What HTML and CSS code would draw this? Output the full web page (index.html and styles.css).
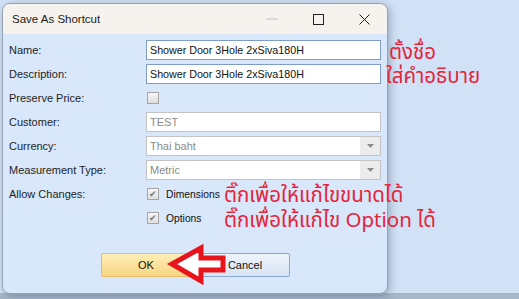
FILE: index.html
```html
<!DOCTYPE html>
<html lang="en">
<head>
  <meta charset="UTF-8" />
  <title>Save As Shortcut</title>
  <link rel="stylesheet" href="styles.css">
</head>
<body>
  <div class="dialog">
    <div class="titlebar">
      <span class="title">Save As Shortcut</span>
      <div class="controls">
        <span class="ctl"><svg width="12" height="2"><line x1="0" y1="1" x2="12" y2="1" stroke="#c4c4c4" /></svg></span>
        <span class="ctl"><svg width="11" height="11"><rect x="0.5" y="0.5" width="10" height="10" fill="none" stroke="#222" /></svg></span>
        <span class="ctl"><svg width="11" height="11"><path d="M0.5 0.5L10.5 10.5M10.5 0.5L0.5 10.5" stroke="#222" /></svg></span>
      </div>
    </div>

    <div class="content">
      <div class="form">
        <span class="label">Name:</span>
        <div class="text">Shower Door 3Hole 2xSiva180H</div>

        <span class="label">Description:</span>
        <div class="text">Shower Door 3Hole 2xSiva180H</div>

        <span class="label">Preserve Price:</span>
        <div class="check-row"><span class="box"></span></div>

        <span class="label">Customer:</span>
        <div class="text disabled">TEST</div>

        <span class="label">Currency:</span>
        <div class="text disabled select">
          <span>Thai baht</span>
          <span class="drop"><svg width="7" height="4"><path d="M0 0H7L3.5 4Z" fill="#8c8c8c" /></svg></span>
        </div>

        <span class="label">Measurement Type:</span>
        <div class="text disabled select">
          <span>Metric</span>
          <span class="drop"><svg width="7" height="4"><path d="M0 0H7L3.5 4Z" fill="#8c8c8c" /></svg></span>
        </div>

        <span class="label">Allow Changes:</span>
        <div class="check-row"><span class="box checked">&#10004;</span><span class="opt">Dimensions</span></div>

        <span class="label"></span>
        <div class="check-row"><span class="box checked">&#10004;</span><span class="opt">Options</span></div>
      </div>

      <div class="actions">
        <button class="btn ok">OK</button>
        <button class="btn cancel">Cancel</button>
      </div>
    </div>
  </div>

  <div class="note note-name">ตั้งชื่อ</div>
  <div class="note note-desc">ใส่คำอธิบาย</div>
  <div class="note note-dims">ติ๊กเพื่อให้แก้ไขขนาดได้</div>
  <div class="note note-opts">ติ๊กเพื่อให้แก้ไข Option ได้</div>

  <svg class="arrow" width="519" height="299">
    <polygon points="172,264 201,248 201,258 223,258 223,270 201,270 201,281" fill="#fff" stroke="#e8141c" stroke-width="5" stroke-linejoin="miter" />
  </svg>
</body>
</html>
```

FILE: styles.css
```css
* {
  box-sizing: border-box;
}

body {
  margin: 0;
  width: 519px;
  height: 299px;
  overflow: hidden;
  position: relative;
  font-family: 'Liberation Sans', Arial, sans-serif;
  background: linear-gradient(#d2e2f6 0, #d2e2f6 293px, #a8b6c9 293px);
}

.dialog {
  margin: 3px 0 0 2px;
  width: 386px;
  height: 291px;
  background: #d8e7fa;
  border: 1px solid #97a3b2;
  border-radius: 8px;
  overflow: hidden;
  box-shadow: 2px 2px 8px rgba(40, 60, 90, 0.35);
  display: flex;
  flex-direction: column;
}

.titlebar {
  height: 30px;
  flex: none;
  background: #f6f2ee;
  display: flex;
  align-items: center;
  justify-content: space-between;
}

.title {
  padding-left: 9px;
  font-size: 11.5px;
  color: #1b1b1b;
}

.controls {
  display: flex;
  height: 100%;
}

.ctl {
  width: 46px;
  display: flex;
  align-items: center;
  justify-content: center;
}

.content {
  flex: 1;
  padding: 6px 5px 0 6px;
  display: flex;
  flex-direction: column;
}

.form {
  display: grid;
  grid-template-columns: 137px 235px;
  grid-auto-rows: 20px;
  row-gap: 4px;
  font-size: 11px;
  color: #1e1e1e;
}

.label {
  display: flex;
  align-items: center;
}

.text {
  border: 1px solid #7e9ec6;
  background: #fff;
  padding: 0 3px;
  display: flex;
  align-items: center;
  font-size: 10.7px;
  color: #111;
}

.text.disabled {
  border-color: #c3c3c3;
  color: #8b8b8b;
  font-size: 11px;
}

.select {
  justify-content: space-between;
  padding-right: 0;
}

.drop {
  width: 20px;
  height: 100%;
  background: #ececec;
  display: flex;
  align-items: center;
  justify-content: center;
}

.check-row {
  display: flex;
  align-items: center;
  padding-left: 1px;
}

.box {
  width: 12px;
  height: 12px;
  border: 1px solid #a5a5a5;
  background: linear-gradient(#f6f6f6, #dedede);
  font-size: 9px;
  line-height: 10px;
  text-align: center;
  color: #7a7a7a;
}

.opt {
  margin-left: 7px;
  font-size: 10.3px;
  color: #111;
}

.actions {
  margin-top: 25px;
  display: flex;
  justify-content: center;
  gap: 9px;
}

.btn {
  width: 90px;
  height: 24px;
  font-family: 'Liberation Sans', Arial, sans-serif;
  font-size: 11px;
  color: #111;
  border-radius: 2px;
  padding: 0;
}

.ok {
  border: 1px solid #e3bd6a;
  background: linear-gradient(#fdeeb8, #f9d680);
}

.cancel {
  border: 1px solid #88a9d3;
  background: linear-gradient(#eef4fc, #d6e4f6);
}

.note {
  position: absolute;
  color: #e4253a;
  font-family: 'Noto Sans Thai', 'Noto Sans', 'DejaVu Sans', sans-serif;
  font-size: 20.5px;
  line-height: 1;
  white-space: nowrap;
}

.note-name {
  left: 389px;
  top: 43px;
}

.note-desc {
  left: 386px;
  top: 67px;
}

.note-dims {
  left: 224px;
  top: 186px;
}

.note-opts {
  left: 224px;
  top: 211px;
}

.arrow {
  position: absolute;
  left: 0;
  top: 0;
}
```
